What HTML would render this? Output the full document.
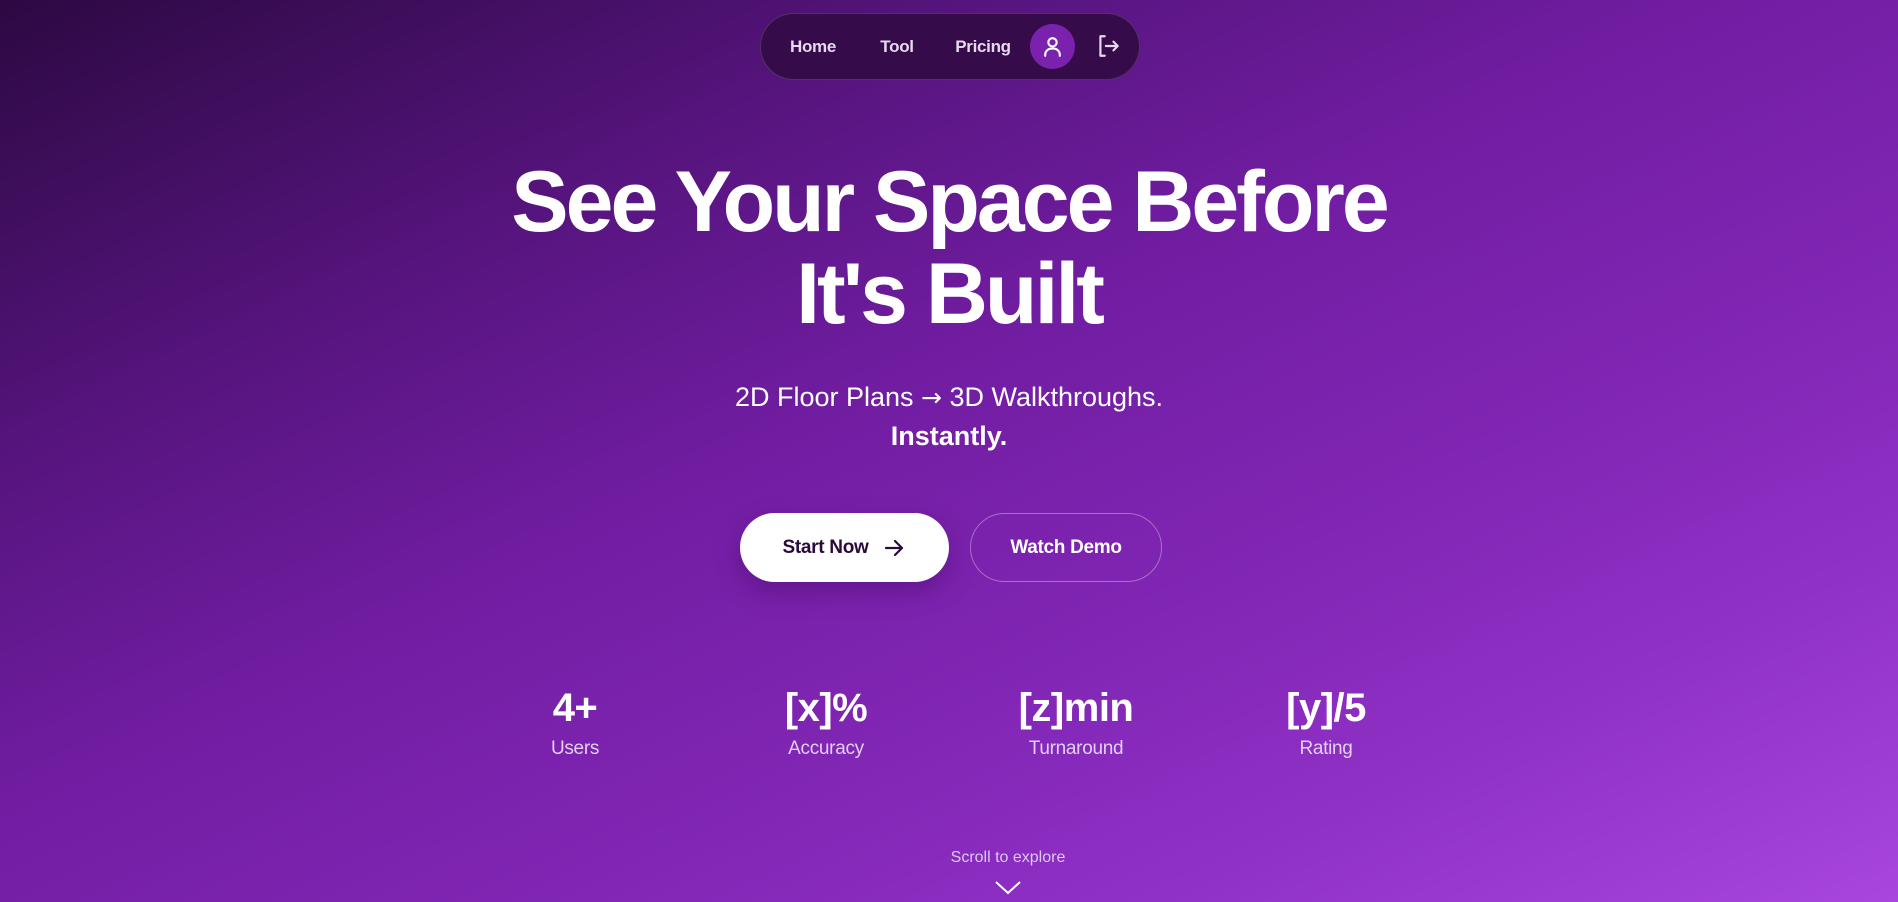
<!DOCTYPE html>
<html><head><meta charset="utf-8"><style>
*{margin:0;padding:0;box-sizing:border-box}
html,body{width:1898px;height:902px;overflow:hidden}
body{font-family:"Liberation Sans",sans-serif;color:#fff;position:relative;
background:linear-gradient(to bottom right,#2c0942 0%,#55147c 25%,#711da2 45%,#8126b5 65%,#9132c8 82%,#a846dd 100%);}
.nav{position:absolute;left:760px;top:13px;width:380px;height:67px;border-radius:34px;background:#350b4a;border:1px solid rgba(255,255,255,.15)}
.nl{position:absolute;top:37px;font-size:17px;font-weight:bold;color:#e6d9ee;transform:translateX(-50%);letter-spacing:-.3px}
.av{position:absolute;left:1030px;top:24px;width:45px;height:45px;border-radius:50%;background:#7a22ad}
h1{position:absolute;left:0;width:1898px;top:156px;text-align:center;font-size:86px;line-height:92px;font-weight:bold;letter-spacing:-3px}
.sub{position:absolute;left:0;width:1898px;top:378px;text-align:center;font-size:27px;line-height:38px}
.btn{position:absolute;top:513px;height:69px;border-radius:35px;font-size:19px;font-weight:bold;display:flex;align-items:center;justify-content:center;letter-spacing:-.3px}
.b1{left:740px;width:209px;background:#fff;color:#2a0a3c;box-shadow:0 10px 25px rgba(60,0,90,.35)}
.b2{left:970px;width:192px;border:1px solid rgba(255,255,255,.35);color:#fff}
.st{position:absolute;top:684px;width:200px;text-align:center;transform:translateX(-50%)}
.st b{display:block;font-size:40px;line-height:48px;letter-spacing:-.5px}
.st i{display:block;font-style:normal;font-size:19px;color:#e2cff0;margin-top:6px;letter-spacing:-.3px}
.sc{position:absolute;left:908px;width:200px;top:849px;text-align:center;font-size:16px;color:#dcc8ee}
</style></head><body>
<div class="nav"></div>
<span class="nl" style="left:813px">Home</span>
<span class="nl" style="left:897px">Tool</span>
<span class="nl" style="left:983px">Pricing</span>
<div class="av"></div>
<svg style="position:absolute;left:1040px;top:34px" width="25" height="25" viewBox="0 0 24 24" fill="none" stroke="#fff" stroke-width="2" stroke-linecap="round"><circle cx="12" cy="8" r="4"/><path d="M5 21v-1a6 6 0 0 1 6-6h2a6 6 0 0 1 6 6v1"/></svg>
<svg style="position:absolute;left:1095px;top:33px" width="26" height="26" viewBox="0 0 24 24" fill="none" stroke="#e6d9ee" stroke-width="2" stroke-linecap="round" stroke-linejoin="round"><path d="M9 3H5v18h4"/><path d="M10 12h11M17 8l4 4-4 4"/></svg>
<h1>See Your Space Before<br>It's Built</h1>
<div class="sub">2D Floor Plans <span style="font-family:'DejaVu Sans',sans-serif;font-size:25px">→</span> 3D Walkthroughs.<br><b>Instantly.</b></div>
<div class="btn b1">Start Now <svg style="margin-left:14px" width="24" height="24" viewBox="0 0 24 24" fill="none" stroke="#2a0a3c" stroke-width="2.2" stroke-linecap="round" stroke-linejoin="round"><path d="M4 12h16M13 5l7 7-7 7"/></svg></div>
<div class="btn b2">Watch Demo</div>
<div class="st" style="left:575px"><b>4+</b><i>Users</i></div>
<div class="st" style="left:826px"><b>[x]%</b><i>Accuracy</i></div>
<div class="st" style="left:1076px"><b>[z]min</b><i>Turnaround</i></div>
<div class="st" style="left:1326px"><b>[y]/5</b><i>Rating</i></div>
<div class="sc">Scroll to explore</div>
<svg style="position:absolute;left:994px;top:879px" width="28" height="16" viewBox="0 0 28 16" fill="none" stroke="#fff" stroke-width="2"><path d="M2 3l12 11 12-11"/></svg>
</body></html>
